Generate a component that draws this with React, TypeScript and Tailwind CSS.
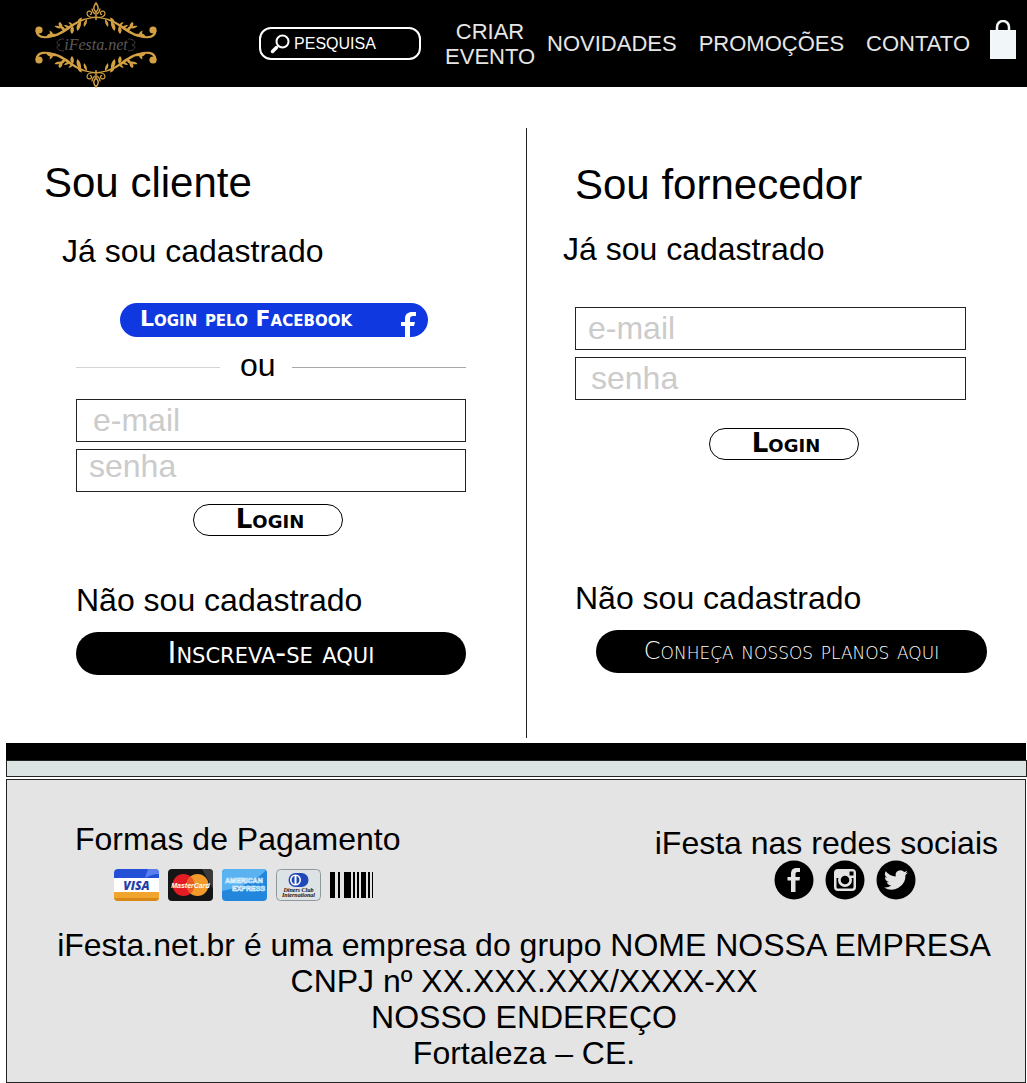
import type { ReactNode } from "react";

const gothic = "font-['DejaVu_Sans'] [font-variant:small-caps]";

function Flourish() {
  return (
    <g fill="#d3a143">
      <circle cx="5" cy="28" r="3.6" />
      <path d="M1.500 28c0 6 4 8.500 10 8.200 9-.4 17-4 24-9.200 8-6 15-10.500 27-11v-1c-13 .3-21 4.500-29 10-6 4.300-12 8.300-20 9.200-5 .5-8.500-1-9.500-4z" />
      <path d="M12 35c1-2 2-3 4-3.500l-.5-3c2 .8 3.200 2 3.500 3.500 2-.5 4-.3 6 .5-3 2-8 3.500-13 2.500z" />
      <path d="M31 29c-2-.4-3.400-1.300-4-2.700-2.500.4-5-.3-6.500-2.300 2-.6 3.500-.4 5 .5-1.300-1.700-1.200-3.300 0-4.500 2 1 3 2.500 3 4.500 2 1 3 2.500 2.500 4.500z" />
      <path d="M36 26c-3 .3-5-1-6-3 3-.2 5 .8 6 3zM39 24c-2.500-.5-4-2-4.500-4 2.500.5 4 1.800 4.500 4z" />
      <path d="M38 32c-2.500-2.500-2-6 1-8 1.500 3 1.200 6-1 8zM43.500 29c-2-3.500-.8-7.500 3.500-10 .5 4-.7 7.500-3.500 10zM50 25c-1-3 0-6 3-8 .3 3.300-.6 6-3 8z" />
      <path d="M44 21c-1-2.500 1-5 4-5.500-.3 2.700-1.600 4.700-4 5.500z" />
      <g fill="none" stroke="#d3a143" strokeWidth="1.200">
        <path d="M61 15c-4 1-8-.5-8-3.500 0-2.500 3.500-3.500 4.500-1 .4 1.300-.6 2.200-1.700 1.800" />
        <path d="M61 12c-2-1.500-3-3.500-3-5.500" />
      </g>
      <path d="M30 37c-4 0-7 1.500-7 4 0 1.500 2 2 3 1" fill="none" stroke="#3b3b3b" />
    </g>
  );
}

function HalfFrame() {
  return (
    <g>
      <Flourish />
      <g transform="translate(124 0) scale(-1 1)"><Flourish /></g>
      <path d="M62 1c-3 4-3 6 0 9 3-3 3-5 0-9zM62 10v8" fill="none" stroke="#d3a143" strokeWidth="1.500" />
    </g>
  );
}

function Logo() {
  return (
    <a href="#" aria-label="iFesta.net" className="relative mt-0.5 block h-[86px] w-[124px] shrink-0">
      <svg viewBox="0 0 124 86" className="h-full w-full" aria-hidden="true">
        <HalfFrame />
        <g transform="translate(0 86) scale(1 -1)"><HalfFrame /></g>
      </svg>
      <span className="absolute inset-0 flex items-center justify-center font-['Liberation_Serif'] text-base text-[#5a5a5a] italic">iFesta.net</span>
    </a>
  );
}

function Field({ id, type, label, pad }: { id: string; type: string; label: string; pad: string }) {
  return (
    <input
      id={id}
      type={type}
      aria-label={label}
      placeholder={label}
      className={"block h-[43px] w-full border border-[#222] bg-white text-[32px] leading-10 text-black placeholder:text-[#cbcbcb] placeholder:opacity-100 " + pad}
    />
  );
}

function LoginButton() {
  return (
    <button type="submit" className={"flex h-8 w-[150px] items-center justify-center rounded-full border border-black bg-white pb-0.5 pl-1 text-[26px] leading-7 font-bold " + gothic}>
      Login
    </button>
  );
}

function Card({ className, label, children }: { className: string; label: string; children: ReactNode }) {
  return (
    <li>
      <svg viewBox="0 0 45 32" role="img" aria-label={label} className={"h-8 w-[45px] rounded-[4px] " + className}>
        {children}
      </svg>
    </li>
  );
}

function Payments() {
  return (
    <ul className="flex items-center gap-[9px]">
      <Card label="Visa" className="bg-white">
        <rect width="45" height="9" fill="#2450d8" />
        <rect y="23" width="45" height="9" fill="#f0a52c" />
        <path d="M34 0h11v5c-6 0-10 2-14 4z" fill="#5b80ee" />
        <path d="M0 29h45v3H0z" fill="#d98716" />
        <text x="22.500" y="20.500" textAnchor="middle" fontFamily="Open Sans" fontWeight="800" fontStyle="italic" fontSize="12" fill="#2340a8">VISA</text>
      </Card>
      <Card label="MasterCard" className="bg-[#151515]">
        <path d="M34 0h11v20z" fill="#3a3a3a" />
        <circle cx="15.500" cy="16" r="11" fill="#e31b23" />
        <circle cx="29.500" cy="16" r="11" fill="#f29a2a" />
        <path d="M22.500 7.500a11 11 0 0 1 0 17a11 11 0 0 1 0-17z" fill="#ea5a26" />
        <text x="22.500" y="18.500" textAnchor="middle" fontFamily="Liberation Sans" fontWeight="700" fontStyle="italic" fontSize="7" fill="#fff">MasterCard</text>
      </Card>
      <Card label="American Express" className="bg-[#2186dc]">
        <path d="M0 0h45c-8 10-25 18-45 22z" fill="#5ab2f0" />
        <text x="3" y="14" fontFamily="Liberation Sans" fontWeight="700" fontSize="7" fill="#5ab2f0" stroke="#e3f6ff" strokeWidth=".6">AMERICAN</text>
        <text x="10" y="22" fontFamily="Liberation Sans" fontWeight="700" fontSize="7" fill="#5ab2f0" stroke="#e3f6ff" strokeWidth=".6">EXPRESS</text>
      </Card>
      <Card label="Diners Club International" className="bg-[#dde3e4]">
        <rect x=".5" y=".5" width="44" height="31" rx="4" fill="none" stroke="#8f999b" />
        <rect x="12.500" y="4" width="20" height="14" rx="7" fill="#2148b8" />
        <circle cx="19.500" cy="11" r="5.500" fill="#fff" />
        <path d="M18.500 7v8a4.200 4.200 0 0 1 0-8zM20.500 7v8a4.200 4.200 0 0 0 0-8z" fill="#2148b8" />
        <text x="22.500" y="23" textAnchor="middle" fontFamily="Liberation Serif" fontWeight="700" fontStyle="italic" fontSize="6" fill="#111">Diners Club</text>
        <text x="22.500" y="28" textAnchor="middle" fontFamily="Liberation Serif" fontWeight="700" fontStyle="italic" fontSize="6" fill="#111">International</text>
      </Card>
      <li>
        <svg viewBox="0 0 44 26" role="img" aria-label="Boleto" className="h-[26px] w-11">
          <path d="M0 0h5v26H0zM8 0h2v26H8zM14 0h7v26h-7zM23 0h2v26h-2zM27 0h2v26h-2zM31 0h5v26h-5zM38 0h2v26h-2zM42 0h1v26h-1z" />
        </svg>
      </li>
    </ul>
  );
}

function Social({ label, children }: { label: string; children: ReactNode }) {
  return (
    <a href="#" aria-label={label} className="block size-10">
      <svg viewBox="0 0 40 40" className="h-full w-full" aria-hidden="true">
        <circle cx="20" cy="20" r="19.500" />
        {children}
      </svg>
    </a>
  );
}

export default function App() {
  return (
    <div className="bg-white font-['Liberation_Sans',sans-serif] text-black">
      <header className="flex h-[87px] items-center bg-black pr-[11px] pl-[34px] text-[22px] leading-[25px] text-[#e6e6e6]">
        <Logo />
        <label className="ml-auto flex h-[33px] w-[162px] shrink-0 items-center gap-1 rounded-xl border-2 border-white pl-[9px]">
          <svg viewBox="0 0 20 20" className="size-5 shrink-0" aria-hidden="true">
            <circle cx="12.500" cy="7.500" r="6" fill="none" stroke="#fff" strokeWidth="2" />
            <path d="M2.500 17.500l4-4" stroke="#fff" strokeWidth="3.500" strokeLinecap="round" />
          </svg>
          <input type="search" aria-label="Pesquisa" placeholder="PESQUISA" className="w-full min-w-0 bg-transparent text-base placeholder:text-white placeholder:opacity-100" />
        </label>
        <nav className="flex items-center">
          <a href="#" className="ml-6 w-[90px] text-center">CRIAR EVENTO</a>
          <a href="#" className="ml-3">NOVIDADES</a>
          <a href="#" className="ml-[22px]">PROMOÇÕES</a>
          <a href="#" className="ml-[22px]">CONTATO</a>
        </nav>
        <a href="#" aria-label="Sacola" className="ml-5 -mt-2 block shrink-0">
          <svg viewBox="0 0 26 40" className="h-10 w-[26px]" aria-hidden="true">
            <path d="M0 10h26v29H0z" fill="#f1f7f8" />
            <path d="M7 12V7a6 6 0 0 1 12 0v5" fill="none" stroke="#f1f7f8" strokeWidth="2.500" />
          </svg>
        </a>
      </header>

      <main className="grid grid-cols-[527fr_500fr] pt-[41px] pb-[5px]">
        <section className="border-r border-[#222] pt-[31px] pr-[60px] pb-[63px] pl-[76px]">
          <h1 className="-ml-8 text-[42px] leading-[48px]">Sou cliente</h1>
          <h2 className="mt-6 -ml-3.5 text-[32px] leading-10">Já sou cadastrado</h2>
          <form onSubmit={(e) => e.preventDefault()}>
            <button type="button" className={"mt-8 ml-11 flex h-[34px] w-[308px] items-center justify-between rounded-full bg-[#0f38e0] pr-3 pl-5 text-[22px] leading-8 text-white " + gothic}>
              <span className="pb-0.5 font-bold">Login pelo Facebook</span>
              <svg viewBox="0 0 15 25" className="h-[25px] w-[15px] self-end" aria-hidden="true">
                <path d="M4 25V14H0v-4h4V7c0-5 3-7 7-7h4v4h-3c-2 0-3 1-3 3v3h5l-1 4H9v11z" fill="#fff" />
              </svg>
            </button>
            <div className="mt-2 flex items-center text-[32px] leading-10">
              <span className="mt-1 h-px w-36 bg-[#d4d4d4]" />
              <span className="ml-5">ou</span>
              <span className="mt-1 ml-4 h-px flex-1 bg-[#a8a8a8]" />
            </div>
            <div className="mt-3.5 flex flex-col gap-[7px]">
              <Field id="cliente-email" type="email" label="e-mail" pad="pl-4" />
              <Field id="cliente-senha" type="password" label="senha" pad="pl-3 pb-2" />
            </div>
            <div className="mt-3 ml-[117px]"><LoginButton /></div>
          </form>
          <h2 className="mt-11 text-[32px] leading-10">Não sou cadastrado</h2>
          <button type="button" className={"mt-3 flex h-[43px] w-full items-center justify-center rounded-full bg-black pb-0.5 text-3xl leading-9 text-white " + gothic}>
            Inscreva-se aqui
          </button>
        </section>

        <section className="pt-[33px] pr-[61px] pl-12">
          <h1 className="text-[42px] leading-[48px]">Sou fornecedor</h1>
          <h2 className="mt-5 -ml-3 text-[32px] leading-10">Já sou cadastrado</h2>
          <form onSubmit={(e) => e.preventDefault()}>
            <div className="mt-[38px] flex flex-col gap-[7px]">
              <Field id="fornecedor-email" type="email" label="e-mail" pad="pl-3" />
              <Field id="fornecedor-senha" type="password" label="senha" pad="pl-[15px]" />
            </div>
            <div className="mt-7 ml-[134px]"><LoginButton /></div>
          </form>
          <h2 className="mt-[118px] text-[32px] leading-10">Não sou cadastrado</h2>
          <div className="mt-3 -mr-[21px] ml-[21px]">
            <button type="button" className={"flex h-[43px] w-full items-center justify-center rounded-full bg-black pb-0.5 text-2xl leading-8 font-extralight text-white " + gothic}>
              Conheça nossos planos aqui
            </button>
          </div>
        </section>
      </main>

      <footer className="pl-1.5 text-[32px] leading-9">
        <div className="mr-px h-[17px] bg-black" />
        <div className="h-[17px] border border-[#222] bg-[#dce4e3]" />
        <div className="mt-0.5 mr-px border border-[#222] bg-[#e4e4e4] pt-[41px] pb-[11px]">
          <div className="flex justify-between pr-[27px] pl-[68px]">
            <section>
              <h2>Formas de Pagamento</h2>
              <div className="mt-3 ml-[39px]"><Payments /></div>
            </section>
            <section className="mt-1">
              <h2>iFesta nas redes sociais</h2>
              <div className="-mt-px mb-px ml-[119px] flex gap-[11px]">
                <Social label="Facebook">
                  <path d="M17 32V20.500h-3.500V17H17v-3c0-4 2-6 5.500-6H26v4h-2.500c-1.500 0-2 .7-2 2v3H26l-.5 3.500h-4V32z" fill="#e4e4e4" />
                </Social>
                <Social label="Instagram">
                  <rect x="9" y="9" width="22" height="22" rx="4" fill="#e4e4e4" />
                  <path d="M11.500 18h17v9a1.500 1.500 0 0 1-1.500 1.500H13a1.500 1.500 0 0 1-1.500-1.500z" />
                  <circle cx="20" cy="20" r="7" fill="#e4e4e4" />
                  <circle cx="20" cy="20" r="4.300" />
                  <rect x="24.500" y="11.500" width="4" height="4" />
                </Social>
                <Social label="Twitter">
                  <path transform="translate(8 8)" d="M24 4.600a10 10 0 0 1-2.800.8 5 5 0 0 0 2.100-2.700 10 10 0 0 1-3.100 1.200 4.900 4.900 0 0 0-8.400 4.500A14 14 0 0 1 1.700 3.200a4.900 4.900 0 0 0 1.500 6.500 5 5 0 0 1-2.200-.6 4.900 4.900 0 0 0 3.900 4.900 5 5 0 0 1-2.200.1 4.900 4.900 0 0 0 4.600 3.400A10 10 0 0 1 0 19.500a14 14 0 0 0 21.500-12.400A10 10 0 0 0 24 4.600z" fill="#e4e4e4" />
                </Social>
              </div>
            </section>
          </div>
          <address className="mt-[26px] pl-4 text-center not-italic">
            <p>iFesta.net.br é uma empresa do grupo NOME NOSSA EMPRESA</p>
            <p>CNPJ nº XX.XXX.XXX/XXXX-XX</p>
            <p>NOSSO ENDEREÇO</p>
            <p>Fortaleza – CE.</p>
          </address>
        </div>
      </footer>
    </div>
  );
}
